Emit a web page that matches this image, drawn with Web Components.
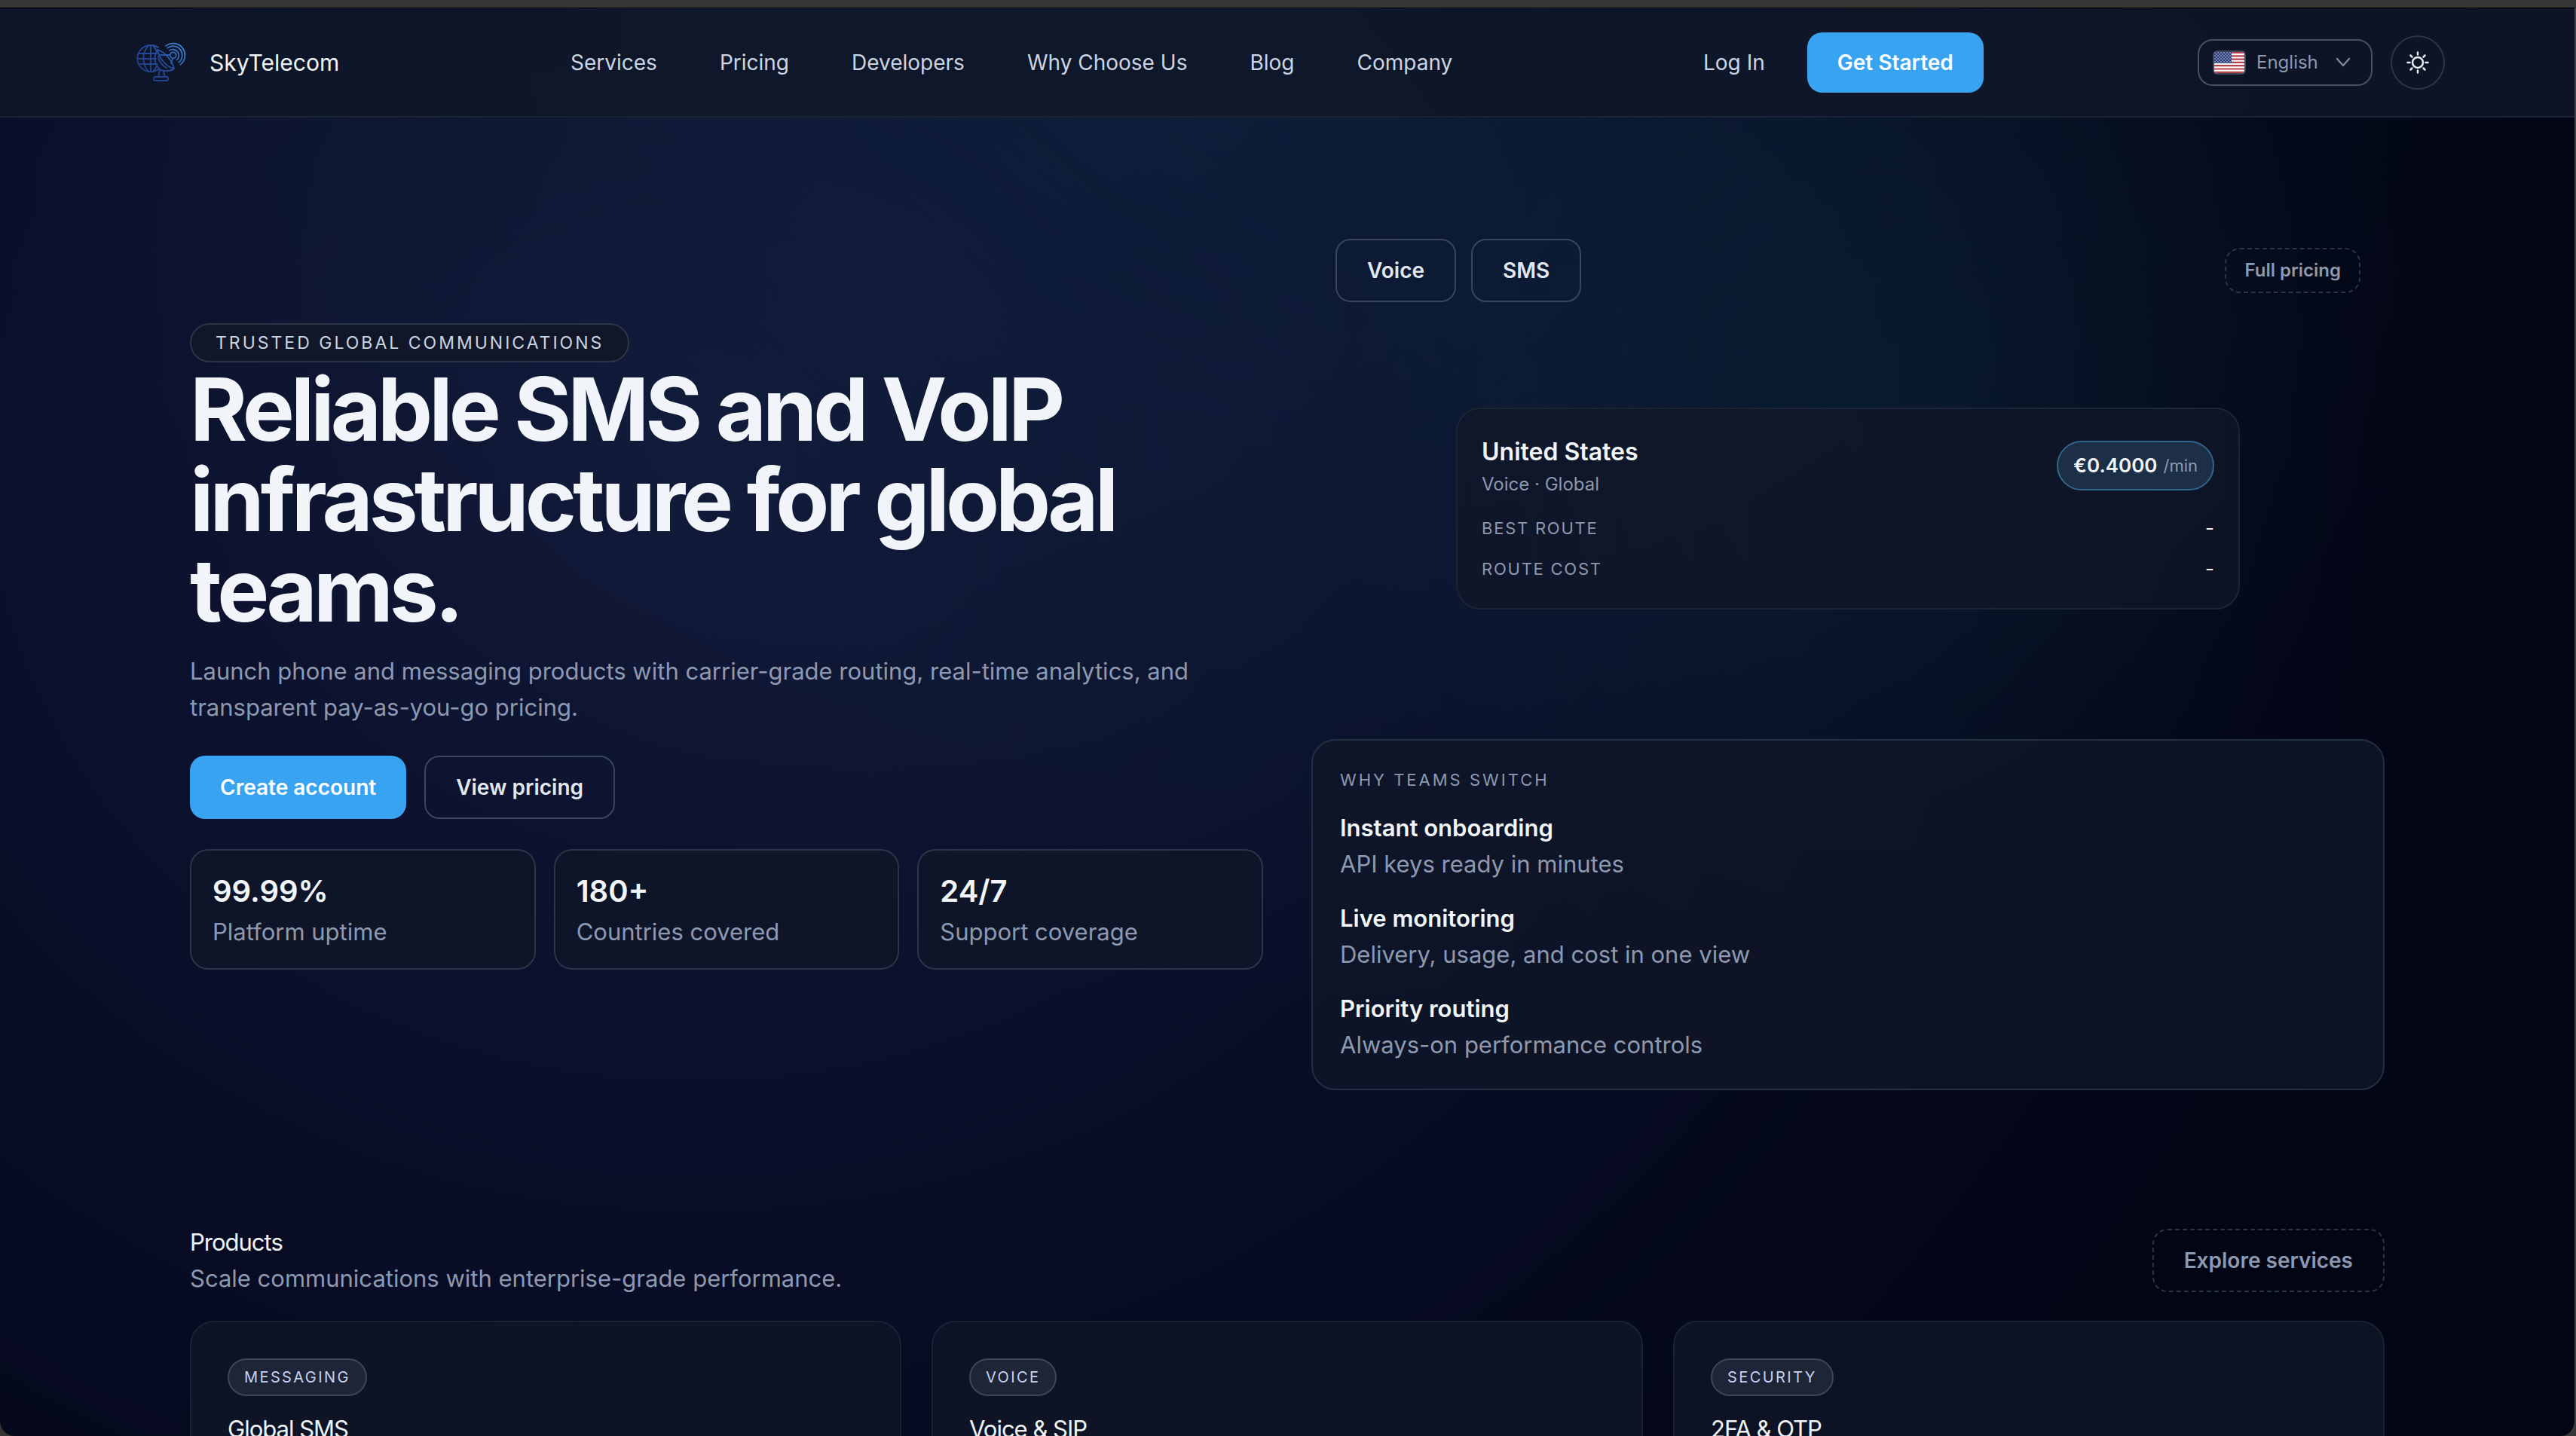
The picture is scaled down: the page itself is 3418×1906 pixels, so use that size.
<!DOCTYPE html>
<html lang="en">
<head>
<meta charset="utf-8">
<title>SkyTelecom</title>
<style>
  html, body {
    margin: 0;
    height: 100%;
  }
  body {
    overflow: hidden;
    background: #363634;
    color: #f1f5f9;
    font: 400 31px/48px Inter, "Liberation Sans", sans-serif;
    --muted: #8d99b0;
    --soft: #cbd5e1;
    --line: #2a3547;
    --line-strong: #3a465a;
    --card: rgba(16, 23, 40, .8);
    --accent: #38a3f1;
  }
</style>
</head>
<body>

<sky-page>
  <sky-header slot="header">
    <nav-link slot="nav" href="#services">Services</nav-link>
    <nav-link slot="nav" href="#pricing">Pricing</nav-link>
    <nav-link slot="nav" href="#developers">Developers</nav-link>
    <nav-link slot="nav" href="#why">Why Choose Us</nav-link>
    <nav-link slot="nav" href="#blog">Blog</nav-link>
    <nav-link slot="nav" href="#company">Company</nav-link>
    <nav-link slot="auth" href="#login">Log In</nav-link>
    <sky-button slot="auth" kind="primary compact">Get Started</sky-button>
    <language-picker slot="tools"></language-picker>
    <theme-toggle slot="tools"></theme-toggle>
  </sky-header>

  <sky-hero>
    <span slot="eyebrow">TRUSTED GLOBAL COMMUNICATIONS</span>
    <span slot="title">Reliable SMS and VoIP infrastructure for global teams.</span>
    <span slot="lead">Launch phone and messaging products with carrier-grade routing, real-time analytics, and transparent pay-as-you-go pricing.</span>
    <sky-button slot="cta" kind="primary">Create account</sky-button>
    <sky-button slot="cta" kind="outline">View pricing</sky-button>
    <stat-card slot="stats" value="99.99%">Platform uptime</stat-card>
    <stat-card slot="stats" value="180+">Countries covered</stat-card>
    <stat-card slot="stats" value="24/7">Support coverage</stat-card>

    <rate-viewer slot="aside">
      <sky-button slot="tabs" kind="outline">Voice</sky-button>
      <sky-button slot="tabs" kind="outline">SMS</sky-button>
      <sky-button slot="more" kind="dashed small">Full pricing</sky-button>
      <rate-card country="United States" price="€0.4000" unit="/min">Voice · Global</rate-card>
    </rate-viewer>
    <why-panel slot="aside" label="WHY TEAMS SWITCH">
      <why-item label="Instant onboarding">API keys ready in minutes</why-item>
      <why-item label="Live monitoring">Delivery, usage, and cost in one view</why-item>
      <why-item label="Priority routing">Always-on performance controls</why-item>
    </why-panel>
  </sky-hero>

  <product-section>
    <span slot="title">Products</span>
    <span slot="lead">Scale communications with enterprise-grade performance.</span>
    <sky-button slot="action" kind="dashed">Explore services</sky-button>
    <product-card tag="MESSAGING">Global SMS</product-card>
    <product-card tag="VOICE">Voice &amp; SIP</product-card>
    <product-card tag="SECURITY">2FA &amp; OTP</product-card>
  </product-section>
</sky-page>

<script>
  // clones a template into an open shadow root and fills [data-attr] nodes
  function define(name, html) {
    const template = document.createElement('template')
    template.innerHTML = html

    window.customElements.define(name, class extends HTMLElement {
      constructor() {
        super()
        this.attachShadow({ mode: 'open' })
        this.shadowRoot.appendChild(template.content.cloneNode(true))
      }

      connectedCallback() {
        this.shadowRoot.querySelectorAll('[data-attr]').forEach(el => {
          el.textContent = this.getAttribute(el.dataset.attr)
        })
        const link = this.shadowRoot.querySelector('a')
        if (link && this.hasAttribute('href')) link.href = this.getAttribute('href')
      }
    })
  }

  define('sky-page', `
    <style>
      :host {
        display: block;
        box-sizing: border-box;
        height: 100vh;
        padding-top: 10px;
      }
      .window {
        box-sizing: border-box;
        height: 100%;
        overflow: hidden;
        border-top: 1px solid #000;
        border-right: 2px solid #41434a;
        border-radius: 0 0 20px 20px;
        background:
          radial-gradient(ellipse 20% 40% at 72% 30%, rgba(20, 100, 100, .13), transparent),
          radial-gradient(ellipse 52% 70% at 50% 0%, rgba(28, 90, 120, .18), transparent),
          radial-gradient(ellipse 70% 110% at 27% 32%, rgba(54, 68, 144, .28), rgba(46, 62, 138, .21) 36%, rgba(38, 48, 130, .11) 68%, transparent),
          #020513;
      }
    </style>
    <div class="window">
      <slot name="header"></slot>
      <main><slot></slot></main>
    </div>
  `)

  define('sky-header', `
    <style>
      :host {
        display: block;
        background: rgba(16, 23, 40, .84);
        border-bottom: 2px solid #1a2435;
      }
      header {
        display: grid;
        grid-template-columns: 583fr 1503fr 656fr 328fr;
        align-items: center;
        height: 143px;
        padding: 0 172px 0 174px;
      }
      .brand {
        display: flex;
        align-items: center;
        gap: 24px;
        color: inherit;
        font-size: 30px;
        text-decoration: none;
      }
      nav, .auth, .tools {
        display: flex;
        align-items: center;
      }
      nav { gap: 83px; }
      .auth { gap: 56px; }
      .tools { gap: 24px; }
      svg { display: block; }
    </style>
    <header>
      <a class="brand" href="#home">
        <svg width="80" height="64" viewBox="0 0 80 64" fill="none" stroke="url(#g)" stroke-width="1.8" stroke-linecap="round" stroke-linejoin="round">
          <defs>
            <linearGradient id="g" x1="14" y1="56" x2="66" y2="8" gradientUnits="userSpaceOnUse">
              <stop offset="0" stop-color="#1f3a86"/>
              <stop offset=".55" stop-color="#254c9c"/>
              <stop offset="1" stop-color="#3f86cf"/>
            </linearGradient>
          </defs>
          <path d="M36 12A17.700 17.700 0 1 0 37.500 40"/>
          <path d="M26 9v35M23 9.500c-9 10-9 24 0 34.500M29 9.500c2 2 3.500 4.500 4.500 7M29 44c2-2 3.500-4 4.500-6.500M10 20h24M8.500 27h24.500M10 34h24.500"/>
          <path d="M35 15C27 28 34 45 48 43c4 0 7-1 9-3M35 15c10 3 19 14 22 25C47 38 37 27 35 15z"/>
          <path d="M39 22h12.500M36 24c1 8 5 12 11 15M55 27l-2 6M38 42l-2 9M43 43l1.500 8"/>
          <rect x="30" y="51" width="19" height="5" rx="2"/>
          <circle cx="55.700" cy="22.300" r="4"/>
          <path d="M50.800 16A8 8 0 0 1 60.600 28.600M48.300 12.800A12 12 0 0 1 63.100 31.800M46 9.900A15.700 15.700 0 0 1 65.400 34.700"/>
        </svg>
        <span>SkyTelecom</span>
      </a>
      <nav aria-label="Main"><slot name="nav"></slot></nav>
      <div class="auth"><slot name="auth"></slot></div>
      <div class="tools"><slot name="tools"></slot></div>
    </header>
  `)

  define('nav-link', `
    <style>
      :host { display: block; }
      a {
        color: var(--soft);
        font-size: 28px;
        text-decoration: none;
        white-space: nowrap;
      }
    </style>
    <a href="#"><slot></slot></a>
  `)

  define('sky-button', `
    <style>
      :host { display: block; }
      button {
        display: block;
        box-sizing: border-box;
        height: 84px;
        padding: 0 40px;
        border: 2px solid transparent;
        border-radius: 20px;
        background: none;
        color: #e2e8f0;
        font: 600 28px/40px Inter, "Liberation Sans", sans-serif;
        white-space: nowrap;
      }
      :host([kind~="primary"]) button {
        border: 0;
        background: var(--accent);
        color: #fff;
      }
      :host([kind~="outline"]) button { border-color: var(--line-strong); }
      :host([kind~="dashed"]) button {
        border: 2px dashed var(--line);
        color: var(--muted);
      }
      :host([kind~="compact"]) button { height: 80px; }
      :host([kind~="small"]) button {
        height: 60px;
        padding: 0 24px;
        font-size: 24px;
      }
    </style>
    <button type="button"><slot></slot></button>
  `)

  define('language-picker', `
    <style>
      :host { display: block; }
      .box {
        display: flex;
        align-items: center;
        box-sizing: border-box;
        height: 62px;
        padding: 0 26px 0 18px;
        border: 2px solid #465063;
        border-radius: 20px;
      }
      .flag { margin-right: 14px; }
      select {
        appearance: none;
        margin: 0;
        padding: 0;
        width: 104px;
        border: 0;
        background: none;
        color: var(--muted);
        font: 400 24px/32px Inter, "Liberation Sans", sans-serif;
      }
      svg { display: block; }
    </style>
    <div class="box">
      <svg class="flag" width="44" height="32" viewBox="0 0 44 32">
        <defs>
          <clipPath id="c"><rect x="2" y="2" width="40" height="28" rx="4"/></clipPath>
          <pattern id="s" width="4" height="4" patternUnits="userSpaceOnUse">
            <circle cx="1" cy="1" r=".8" fill="#dbe3f4"/>
            <circle cx="3" cy="3" r=".8" fill="#dbe3f4"/>
          </pattern>
        </defs>
        <rect width="44" height="32" rx="6" fill="#3f495b"/>
        <g clip-path="url(#c)">
          <rect x="2" y="2" width="40" height="28" fill="#fff"/>
          <path d="M2 3h40M2 7.300h40M2 11.600h40M2 15.900h40M2 20.200h40M2 24.500h40M2 28.800h40" stroke="#b9414c" stroke-width="2.2"/>
          <rect x="2" y="2" width="23" height="15" fill="#273b78"/>
          <rect x="2" y="2" width="23" height="15" fill="url(#s)"/>
        </g>
      </svg>
      <select aria-label="Language"><option>English</option></select>
      <svg width="22" height="14" viewBox="0 0 22 14" fill="none" stroke="#7c889d" stroke-width="2.4" stroke-linecap="round" stroke-linejoin="round">
        <path d="M3 2l8 9 8-9"/>
      </svg>
    </div>
  `)

  define('theme-toggle', `
    <style>
      :host { display: block; }
      button {
        display: grid;
        place-items: center;
        box-sizing: border-box;
        width: 72px;
        height: 72px;
        padding: 0;
        border: 2px solid var(--line);
        border-radius: 50%;
        background: none;
        color: #e8edf5;
      }
    </style>
    <button type="button" aria-label="Toggle theme">
      <svg width="32" height="32" viewBox="0 0 32 32" fill="none" stroke="currentColor" stroke-width="2.5" stroke-linecap="round">
        <circle cx="16" cy="16" r="7"/>
        <path d="M16 2.500v3M16 26.500v3M2.500 16h3M26.500 16h3M6.500 6.500l2 2M23.500 23.500l2 2M6.500 25.500l2-2M23.500 8.500l2-2"/>
      </svg>
    </button>
  `)

  define('sky-hero', `
    <style>
      :host { display: block; }
      section {
        display: grid;
        grid-template-columns: 1fr 1fr;
        align-items: center;
        gap: 64px;
        padding: 113px 252px 0;
      }
      .eyebrow {
        display: block;
        box-sizing: border-box;
        width: fit-content;
        height: 52px;
        padding: 0 32px;
        border: 2px solid var(--line);
        border-radius: 26px;
        background: #111728;
        color: var(--soft);
        font-size: 23px;
        line-height: 48px;
        letter-spacing: 3px;
      }
      h1 {
        margin: 2px 0 24px;
        font-size: 116px;
        line-height: 120px;
        font-weight: 700;
        letter-spacing: -5px;
      }
      p {
        margin: 0;
        color: var(--muted);
      }
      .cta {
        display: flex;
        gap: 24px;
        margin: 40px 0;
      }
      .stats {
        display: grid;
        grid-template-columns: repeat(3, 1fr);
        gap: 24px;
      }
      aside {
        display: grid;
        gap: 32px;
      }
    </style>
    <section>
      <div>
        <span class="eyebrow"><slot name="eyebrow"></slot></span>
        <h1><slot name="title"></slot></h1>
        <p><slot name="lead"></slot></p>
        <div class="cta"><slot name="cta"></slot></div>
        <div class="stats"><slot name="stats"></slot></div>
      </div>
      <aside><slot name="aside"></slot></aside>
    </section>
  `)

  define('stat-card', `
    <style>
      :host {
        display: block;
        box-sizing: border-box;
        height: 160px;
        padding: 26px 28px;
        border: 2px solid var(--line);
        border-radius: 24px;
        background: var(--card);
      }
      strong {
        display: block;
        margin-bottom: 2px;
        font-size: 40px;
        line-height: 56px;
        font-weight: 600;
      }
      .label {
        display: block;
        line-height: 48px;
        color: var(--muted);
      }
    </style>
    <strong data-attr="value"></strong>
    <span class="label"><slot></slot></span>
  `)

  define('rate-viewer', `
    <style>
      :host {
        display: block;
        padding: 48px 32px 0;
      }
      .bar {
        display: flex;
        align-items: center;
        gap: 20px;
      }
      .more { margin-left: auto; }
      .stage { padding: 140px 160px; }
    </style>
    <div class="bar">
      <slot name="tabs"></slot>
      <div class="more"><slot name="more"></slot></div>
    </div>
    <div class="stage"><slot></slot></div>
  `)

  define('rate-card', `
    <style>
      :host {
        display: block;
        box-sizing: border-box;
        padding: 32px;
        border: 2px solid #1a2535;
        border-radius: 32px;
        background: var(--card);
      }
      .head, dl div {
        display: flex;
        align-items: center;
        justify-content: space-between;
      }
      h2 {
        margin: 0;
        font-size: 32px;
        line-height: 50px;
        font-weight: 600;
      }
      .route {
        color: var(--muted);
        font-size: 24px;
        line-height: 36px;
      }
      .price {
        display: flex;
        align-items: center;
        gap: 8px;
        box-sizing: border-box;
        height: 66px;
        padding: 0 20px;
        border: 2px solid #33648c;
        border-radius: 33px;
        background: #1c2f47;
        font-size: 26px;
        line-height: 40px;
        font-weight: 600;
      }
      small {
        color: var(--muted);
        font-size: 22px;
        font-weight: 400;
      }
      dl {
        display: grid;
        gap: 14px;
        margin: 20px 0 0;
      }
      dl div { height: 40px; }
      dt {
        color: var(--muted);
        font-size: 22px;
        letter-spacing: .08em;
      }
      dd {
        margin: 0;
        font-size: 26px;
      }
    </style>
    <div class="head">
      <div>
        <h2 data-attr="country"></h2>
        <div class="route"><slot></slot></div>
      </div>
      <div class="price"><span data-attr="price"></span><small data-attr="unit"></small></div>
    </div>
    <dl>
      <div><dt>BEST ROUTE</dt><dd>-</dd></div>
      <div><dt>ROUTE COST</dt><dd>-</dd></div>
    </dl>
  `)

  define('why-panel', `
    <style>
      :host {
        display: block;
        padding: 28px 36px 34px;
        border: 2px solid #232f42;
        border-radius: 32px;
        background: var(--card);
      }
      .label {
        margin-bottom: 16px;
        color: var(--muted);
        font-size: 22px;
        letter-spacing: 3px;
      }
      .items {
        display: grid;
        gap: 24px;
      }
    </style>
    <div class="label" data-attr="label"></div>
    <div class="items"><slot></slot></div>
  `)

  define('why-item', `
    <style>
      :host { display: block; }
      strong {
        display: block;
        font-weight: 600;
      }
      span { color: var(--muted); }
    </style>
    <strong data-attr="label"></strong>
    <span><slot></slot></span>
  `)

  define('product-section', `
    <style>
      :host {
        display: block;
        padding: 178px 252px 0;
      }
      .head {
        display: flex;
        align-items: center;
        justify-content: space-between;
        margin-bottom: 32px;
      }
      h2 {
        margin: 0;
        font-size: 31px;
        line-height: 48px;
        font-weight: 400;
        letter-spacing: -1px;
      }
      p {
        margin: 0;
        color: var(--muted);
      }
      .grid {
        display: grid;
        grid-template-columns: repeat(3, 1fr);
        gap: 40px;
      }
    </style>
    <div class="head">
      <div>
        <h2><slot name="title"></slot></h2>
        <p><slot name="lead"></slot></p>
      </div>
      <slot name="action"></slot>
    </div>
    <div class="grid"><slot></slot></div>
  `)

  define('product-card', `
    <style>
      :host {
        display: block;
        padding: 48px;
        border: 2px solid #182232;
        border-radius: 32px;
        background: var(--card);
      }
      .tag {
        box-sizing: border-box;
        width: fit-content;
        height: 50px;
        padding: 0 20px;
        border: 2px solid #3c4658;
        border-radius: 25px;
        background: #1e2536;
        color: #c7d2f0;
        font-size: 20px;
        line-height: 46px;
        letter-spacing: .12em;
      }
      h3 {
        margin: 20px 0 0;
        font-size: 31px;
        line-height: 48px;
        font-weight: 400;
        letter-spacing: -1px;
      }
    </style>
    <div class="tag" data-attr="tag"></div>
    <h3><slot></slot></h3>
  `)
</script>
</body>
</html>
